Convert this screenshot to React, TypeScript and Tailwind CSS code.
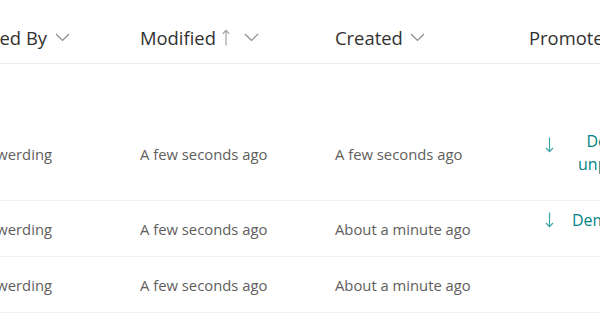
import React from "react";

function Chevron() {
  return (
    <svg width="15" height="9" viewBox="0 0 15 9" className="shrink-0">
      <path d="M1 1 L7.5 7.5 L14 1" fill="none" stroke="#8a8886" strokeWidth="1.1" />
    </svg>
  );
}

function UpArrow() {
  return (
    <svg width="8" height="17" viewBox="0 0 8 17" className="shrink-0">
      <path d="M4 16.5 V1.5 M0.8 4.8 L4 1.3 L7.2 4.8" fill="none" stroke="#a19f9d" strokeWidth="1.2" />
    </svg>
  );
}

function DownArrow() {
  return (
    <svg width="9" height="16" viewBox="0 0 9 16" className="shrink-0">
      <path d="M4.5 0.5 V14.5 M1 11 L4.5 14.6 L8 11" fill="none" stroke="#3aa4a6" strokeWidth="1.2" />
    </svg>
  );
}

const rows = [
  { by: "Anne Zwerding", mod: "A few seconds ago", created: "A few seconds ago", tall: true, action: "wrap" },
  { by: "Anne Zwerding", mod: "A few seconds ago", created: "About a minute ago", tall: false, action: "line" },
  { by: "Anne Zwerding", mod: "A few seconds ago", created: "About a minute ago", tall: false, action: "none" },
];

export default function App() {
  return (
    <div className="w-[600px] h-[335px] overflow-hidden bg-white font-['Open_Sans',sans-serif]">
      <div className="ml-[-67px] w-[900px]">
        <div className="flex h-[64px] items-center pt-[12px] border-b border-[#edebe9] text-[18.4px] text-[#323130]">
          <div className="w-[195px] shrink-0 pl-3 flex items-center justify-end pr-[58px] gap-[8px]">
            <span className="whitespace-nowrap">Modified By</span>
            <Chevron />
          </div>
          <div className="w-[195px] shrink-0 px-3 flex items-center">
            <span className="whitespace-nowrap">Modified</span>
            <span className="ml-[6px] flex"><UpArrow /></span>
            <span className="ml-[14px] flex"><Chevron /></span>
          </div>
          <div className="w-[194px] shrink-0 px-3 flex items-center gap-[7px]">
            <span className="whitespace-nowrap">Created</span>
            <Chevron />
          </div>
          <div className="w-[200px] shrink-0 px-3 flex items-center">
            <span className="whitespace-nowrap">Promoted State</span>
          </div>
        </div>
        {rows.map((r, i) => (
          <div
            key={i}
            className={`flex border-b border-[#f3f2f1] text-[14.8px] leading-[20px] text-[#605e5c] ${r.tall ? "h-[137px] items-start pt-[80px]" : "h-[56px] items-center"}`}
          >
            <div className="w-[195px] shrink-0 pl-3 flex justify-end pr-[76px]">
              <span className="whitespace-nowrap">{r.by}</span>
            </div>
            <div className="w-[195px] shrink-0 px-3">
              <span className="whitespace-nowrap">{r.mod}</span>
            </div>
            <div className="w-[194px] shrink-0 px-3">
              <span className="whitespace-nowrap">{r.created}</span>
            </div>
            <div className="w-[200px] shrink-0 pl-[28px] text-[16px] text-[#038387]">
              {r.action === "wrap" && (
                <div className="flex items-start -mt-[14px]">
                  <span className="mt-[7px] flex"><DownArrow /></span>
                  <div className="ml-[24px] flex flex-col items-center leading-[23px]">
                    <span className="whitespace-nowrap ml-[2px]">Demote</span>
                    <span className="whitespace-nowrap">unpublish</span>
                  </div>
                </div>
              )}
              {r.action === "line" && (
                <div className="flex items-center -mt-[18px]">
                  <DownArrow />
                  <span className="ml-[18px] whitespace-nowrap">Demote</span>
                </div>
              )}
            </div>
          </div>
        ))}
      </div>
    </div>
  );
}
